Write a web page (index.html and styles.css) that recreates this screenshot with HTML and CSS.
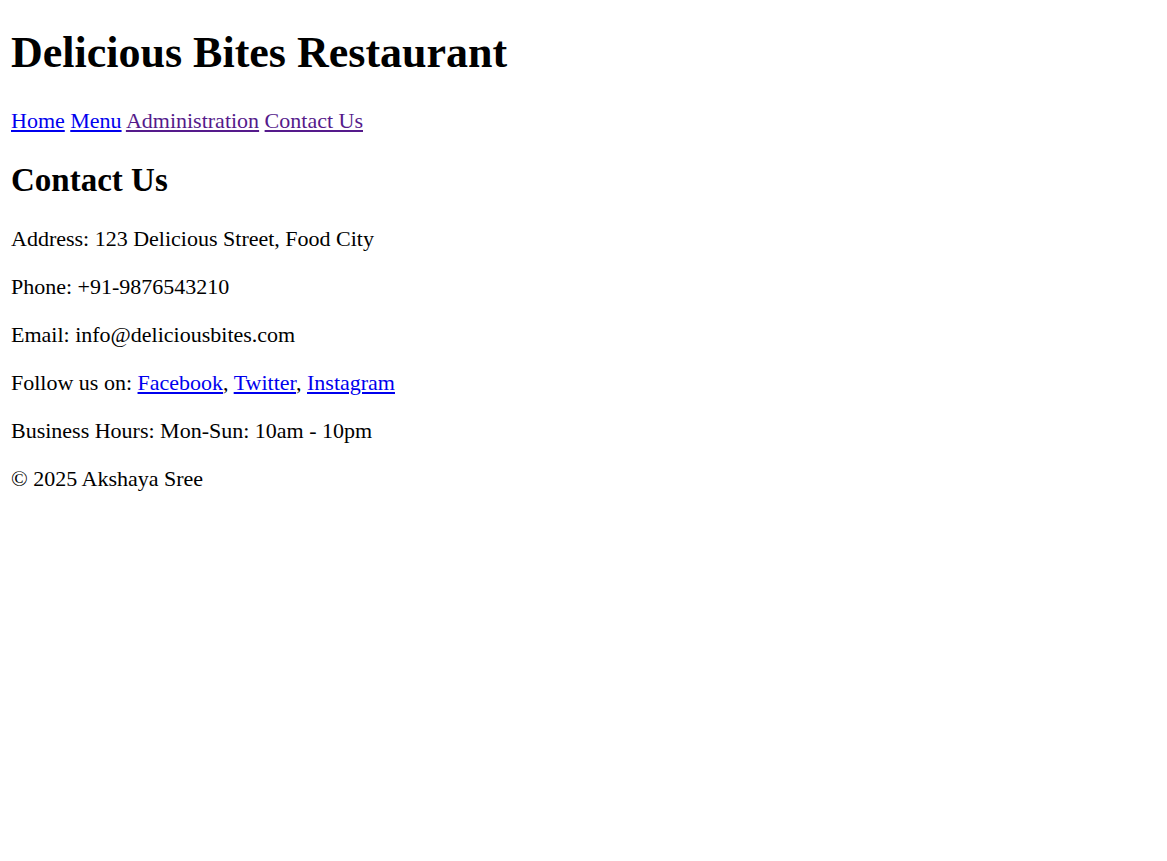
FILE: index.html
```html
<!DOCTYPE html>
<html>
<head>
<meta charset="utf-8">
<title>Contact Us - Delicious Bites Restaurant</title>
<link rel="stylesheet" href="styles.css">
</head>
<body class="page">
<header>
<h1 class="title">Delicious Bites Restaurant</h1>
<nav class="nav">
<a href="#" class="link">Home</a>
<a href="#" class="link">Menu</a>
<a href="#" class="link visited">Administration</a>
<a href="#" class="link visited">Contact Us</a>
</nav>
</header>
<main>
<h2 class="heading">Contact Us</h2>
<p class="para">Address: 123 Delicious Street, Food City</p>
<p class="para">Phone: +91-9876543210</p>
<p class="para">Email: info@deliciousbites.com</p>
<p class="para">Follow us on: <a href="#" class="link">Facebook</a>, <a href="#" class="link">Twitter</a>, <a href="#" class="link">Instagram</a></p>
<p class="para">Business Hours: Mon-Sun: 10am - 10pm</p>
</main>
<footer>
<p class="para">&copy; 2025 Akshaya Sree</p>
</footer>
</body>
</html>
```
FILE: styles.css
```css
html {
  background: #fff;
}
.page {
  margin: 0 11px;
  padding-top: 1px;
  font-family: "Liberation Serif", "Times New Roman", serif;
  font-size: 22px;
  color: #000;
}
.title {
  font-size: 44px;
  margin: 26px 0 30px;
  font-weight: bold;
}
.nav {
  line-height: 26px;
}
.heading {
  font-size: 33px;
  margin: 28px 0 27px;
  font-weight: bold;
}
.para {
  margin: 22px 0;
  line-height: 26px;
}
.link {
  color: #0000ee;
  text-decoration: underline;
}
.link.visited {
  color: #551a8b;
}
```
